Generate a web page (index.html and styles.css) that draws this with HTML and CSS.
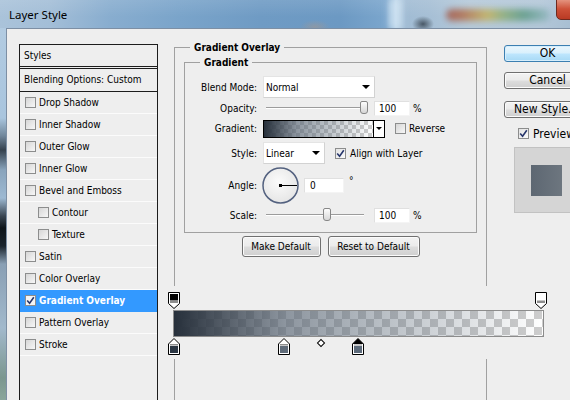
FILE: index.html
```html
<!DOCTYPE html>
<html>
<head>
<meta charset="utf-8">
<title>Layer Style</title>
<link rel="stylesheet" href="styles.css">
</head>
<body>
<div class="titlebar">
  <span class="tb-light"></span>
  <span class="tb-blob"></span>
  <span class="tb-blob2"></span>
  <span class="tb-strip"></span>
  <span class="tb-close"></span>
  <span class="title">Layer Style</span>
</div>
<div class="frame">
  <div class="edge"></div>
  <div class="client">
    <div class="styles">
      <div class="styles-head">Styles</div>
      <div class="blend">Blending Options: Custom</div>
      <div class="srow"><span class="cb"></span><span>Drop Shadow</span></div>
      <div class="srow"><span class="cb"></span><span>Inner Shadow</span></div>
      <div class="srow"><span class="cb"></span><span>Outer Glow</span></div>
      <div class="srow"><span class="cb"></span><span>Inner Glow</span></div>
      <div class="srow"><span class="cb"></span><span>Bevel and Emboss</span></div>
      <div class="srow sub"><span class="cb"></span><span>Contour</span></div>
      <div class="srow sub"><span class="cb"></span><span>Texture</span></div>
      <div class="srow"><span class="cb"></span><span>Satin</span></div>
      <div class="srow"><span class="cb"></span><span>Color Overlay</span></div>
      <div class="srow sel"><span class="cb on"><svg width="9" height="9" viewBox="0 0 9 9"><path d="M1.2 4.4L3.6 7.2L7.8 1.3" fill="none" stroke="#26356b" stroke-width="1.6"/></svg></span><span>Gradient Overlay</span></div>
      <div class="srow"><span class="cb"></span><span>Pattern Overlay</span></div>
      <div class="srow"><span class="cb"></span><span>Stroke</span></div>
    </div>

    <div class="outer">
      <div class="legend">Gradient Overlay</div>
      <div class="inner">
        <div class="legend">Gradient</div>
        <div class="rows">
          <div class="frow r1">
            <span class="lbl">Blend Mode:</span>
            <div class="select wide"><span>Normal</span><span class="arrow"></span></div>
          </div>
          <div class="frow r2">
            <span class="lbl">Opacity:</span>
            <div class="slider"><span class="track"></span><span class="thumb" style="left:97px"></span></div>
            <span class="num">100</span><span class="unit">%</span>
          </div>
          <div class="frow r3">
            <span class="lbl">Gradient:</span>
            <div class="swatch"><span class="sw-grad"></span><span class="sw-dd"><span class="arrow small"></span></span></div>
            <span class="cb gap10"></span><span class="cbtext">Reverse</span>
          </div>
          <div class="frow r4">
            <span class="lbl">Style:</span>
            <div class="select narrow"><span>Linear</span><span class="arrow"></span></div>
            <span class="cb on gap10"><svg width="9" height="9" viewBox="0 0 9 9"><path d="M1.2 4.4L3.6 7.2L7.8 1.3" fill="none" stroke="#26356b" stroke-width="1.6"/></svg></span><span class="cbtext">Align with Layer</span>
          </div>
          <div class="frow r5">
            <span class="lbl">Angle:</span>
            <svg class="dial" width="37" height="37" viewBox="0 0 37 37">
              <defs>
                <radialGradient id="dg" cx="45%" cy="40%" r="65%">
                  <stop offset="0" stop-color="#fbfbfb"/>
                  <stop offset="1" stop-color="#e4e4e4"/>
                </radialGradient>
              </defs>
              <circle cx="18.5" cy="18.5" r="17.5" fill="url(#dg)" stroke="#53617f" stroke-width="1.5"/>
              <line x1="18.5" y1="18.5" x2="35" y2="18.5" stroke="#000" stroke-width="1"/>
              <rect x="17" y="17" width="3" height="3" fill="#000"/>
            </svg>
            <span class="num angle">0</span><span class="deg">°</span>
          </div>
          <div class="frow r6">
            <span class="lbl">Scale:</span>
            <div class="slider"><span class="track"></span><span class="thumb" style="left:60px"></span></div>
            <span class="num">100</span><span class="unit">%</span>
          </div>
        </div>
      </div>
      <div class="btns">
        <span class="btn b1">Make Default</span>
        <span class="btn b2">Reset to Default</span>
      </div>
    </div>

    <div class="side">
      <div class="pbtn ok">OK</div>
      <div class="pbtn cancel">Cancel</div>
      <div class="pbtn newstyle">New Style...</div>
      <div class="prev"><span class="cb on"><svg width="9" height="9" viewBox="0 0 9 9"><path d="M1.2 4.4L3.6 7.2L7.8 1.3" fill="none" stroke="#26356b" stroke-width="1.6"/></svg></span><span class="prevtext">Preview</span></div>
      <div class="prevbox"><div class="prevsq"></div></div>
    </div>
  </div>
</div>

<div class="geditor">
  <div class="ostops">
    <svg class="stop" style="left:3px" width="12" height="17" viewBox="0 0 12 17"><path d="M0.5 0.5H11.5V11.5L6 16.5L0.5 11.5Z" fill="#fff" stroke="#000"/><rect x="2" y="2" width="8" height="6.5" fill="#000"/><rect x="2" y="8.5" width="8" height="2.5" fill="#8e8e8e"/></svg>
    <svg class="stop" style="left:370px" width="12" height="17" viewBox="0 0 12 17"><path d="M0.5 0.5H11.5V11.5L6 16.5L0.5 11.5Z" fill="#fff" stroke="#000"/><rect x="2" y="2" width="8" height="6.5" fill="#fff"/><rect x="2" y="8.5" width="8" height="2.5" fill="#8e8e8e"/></svg>
  </div>
  <div class="gbar"></div>
  <div class="cstops">
    <svg class="stop" style="left:3px" width="12" height="17" viewBox="0 0 12 17"><path d="M6 0.5L11.5 6V16.5H0.5V6Z" fill="#fff" stroke="#000"/><rect x="2" y="6" width="8" height="1.5" fill="#8e8e8e"/><rect x="2" y="8" width="8" height="7" fill="#2b3643"/></svg>
    <svg class="stop" style="left:113px" width="12" height="17" viewBox="0 0 12 17"><path d="M6 0.5L11.5 6V16.5H0.5V6Z" fill="#fff" stroke="#000"/><rect x="2" y="6" width="8" height="1.5" fill="#8e8e8e"/><rect x="2" y="8" width="8" height="7" fill="#5f6b79"/></svg>
    <span class="mid"></span>
    <svg class="stop" style="left:187px" width="12" height="17" viewBox="0 0 12 17"><path d="M6 0.5L11.5 6V16.5H0.5V6Z" fill="#fff" stroke="#000"/><path d="M6 0.5L11.5 6H0.5Z" fill="#000"/><rect x="2" y="6.5" width="8" height="1" fill="#8e8e8e"/><rect x="2" y="8" width="8" height="7" fill="#5c6a7a"/></svg>
  </div>
</div>
</body>
</html>
```

FILE: styles.css
```css
* { box-sizing: border-box; }
html, body { margin: 0; padding: 0; }
body {
  width: 570px;
  height: 400px;
  overflow: hidden;
  position: relative;
  background: #eeeeee;
  font-family: "DejaVu Sans Condensed", "DejaVu Sans", sans-serif;
  font-stretch: condensed;
  font-size: 10px;
  color: #000;
}

/* ---------- title bar ---------- */
.titlebar {
  height: 28px;
  position: relative;
  overflow: hidden;
  padding: 7px 0 0 9px;
  background:
    linear-gradient(rgba(255,255,255,0.10), rgba(255,255,255,0) 60%),
    linear-gradient(to right, #aac3da 0, #a3bed7 50px, #88adcf 110px, #7aa4ca 180px, #6f9bc4 260px, #6c99c3 340px, #7ba6cd 386px, #b9d3e8 396px, #a1bcd4 406px, #a6bfd5 430px, #b5c9d9 470px, #b3c7d8 540px, #a8bfd3 570px);
}
.title {
  position: relative;
  font-family: "Noto Sans", "Open Sans", sans-serif;
  font-stretch: normal;
  font-size: 11.5px;
  line-height: 16px;
  color: #000;
}
.tb-light {
  position: absolute; left: 388px; top: 0; width: 14px; height: 28px;
  background: rgba(220,235,248,0.5); filter: blur(3px);
}
.tb-blob {
  position: absolute; left: 412px; top: 16px; width: 22px; height: 16px;
  background: radial-gradient(closest-side, rgba(50,62,74,0.8), rgba(50,62,74,0));
}
.tb-blob2 {
  position: absolute; left: 300px; top: 20px; width: 30px; height: 14px;
  background: radial-gradient(closest-side, rgba(200,150,110,0.35), rgba(200,150,110,0));
}
.tb-strip {
  position: absolute; left: 446px; top: 9px; width: 104px; height: 12px;
  border-radius: 6px;
  background: linear-gradient(to right, #a0584a, #b26d4e 15%, #c5b35f 40%, #8fae78 55%, #5f9b86 75%, #94b8c2 100%);
  filter: blur(3px);
  opacity: 0.85;
}
.tb-close {
  position: absolute; left: 556px; top: -2px; width: 44px; height: 22px;
  border: 1px solid #6e2a1f;
  border-radius: 0 0 5px 5px;
  background: linear-gradient(#e69a86, #cd5138 50%, #b93a24);
}

/* ---------- frame ---------- */
.frame { display: flex; height: 372px; }
.edge {
  width: 6px;
  flex: none;
  background: linear-gradient(#b2cbe1 0, #a9c5de 90px, #70869a 108px, #34414d 122px, #89a4bc 142px, #9db9d2 170px, #3a4652 188px, #0e1419 200px, #1b242c 218px, #899fb4 236px, #a2b9cc 300px, #7b978f 350px, #8aa69b 372px);
}
.client {
  flex: 1;
  display: flex;
  align-items: flex-start;
  border-top: 1px solid #7d8fa4;
  border-left: 1px solid #7d8fa4;
  padding: 15px 0 0 12px;
  background: #eeeeee;
  overflow: hidden;
}

/* ---------- styles list ---------- */
.styles {
  width: 139px;
  height: 400px;
  flex: none;
  border: 1px solid #1c1c1c;
  border-bottom: none;
}
.styles-head {
  height: 24px;
  border-bottom: 3px double #1c1c1c;
  padding-left: 4px;
  line-height: 21px;
}
.blend {
  height: 23px;
  border-bottom: 1px solid #1c1c1c;
  padding-left: 4px;
  line-height: 22px;
}
.srow {
  height: 22px;
  border-bottom: 1px solid #fbfbfb;
  display: flex;
  align-items: center;
  padding-left: 5px;
}
.srow.sub { padding-left: 18px; }
.srow.sel {
  background: #3399ff;
  color: #fff;
  font-weight: bold;
  border-bottom-color: #3399ff;
}
.srow .cb { margin-right: 3px; }

.cb {
  width: 11px;
  height: 11px;
  flex: none;
  display: inline-flex;
  align-items: center;
  justify-content: center;
  border: 1px solid #8c8d8d;
  background: linear-gradient(135deg, #d6d6d6, #f7f7f7);
}
.cb.on { background: linear-gradient(135deg, #e2e2e2, #fbfbfb); }
.sel .cb.on { background: #f4f4f4; }
.cb svg { display: block; }

/* ---------- fieldsets ---------- */
.outer {
  width: 313px;
  height: 400px;
  flex: none;
  margin: 3px 0 0 16px;
  border: 1px solid #a0a0a0;
  border-bottom: none;
}
.legend {
  width: max-content;
  margin: -7px 0 0 15px;
  padding: 0 4px;
  background: #eeeeee;
  font-weight: bold;
  line-height: 13px;
}
.inner {
  margin: 8px 9px 0 9px;
  border: 1px solid #a0a0a0;
  padding-bottom: 5px;
}
.rows { margin-top: 7px; }
.frow { display: flex; align-items: center; }
.r1 { height: 22px; }
.r2 { height: 20px; }
.r3 { height: 21px; }
.r4 { height: 28px; }
.r5 { height: 36px; }
.r6 { height: 24px; }
.lbl {
  width: 72px;
  flex: none;
  text-align: right;
  margin-right: 6px;
}

.select {
  height: 22px;
  display: flex;
  align-items: center;
  padding-left: 2px;
  background: #fff;
  border: 1px solid #e4e4e4;
  border-right-color: #d2d2d2;
  border-bottom-color: #d2d2d2;
}
.select.wide { width: 112px; }
.select.narrow { width: 62px; }
.arrow {
  margin-left: auto;
  margin-right: 4px;
  width: 0;
  height: 0;
  border-left: 4px solid transparent;
  border-right: 4px solid transparent;
  border-top: 4px solid #000;
}
.arrow.small {
  margin: 0;
  border-left-width: 3px;
  border-right-width: 3px;
  border-top-width: 3px;
}

.slider {
  width: 106px;
  height: 14px;
  flex: none;
  position: relative;
}
.track {
  position: absolute;
  left: 3px;
  top: 6px;
  width: 98px;
  height: 2px;
  border-top: 1px solid #9c9c9c;
  border-bottom: 1px solid #ffffff;
}
.thumb {
  position: absolute;
  top: 0;
  width: 8px;
  height: 13px;
  border: 1px solid #878787;
  border-radius: 2px 2px 3px 3px;
  background: linear-gradient(#fdfdfd, #d6d6d6);
}
.num {
  width: 36px;
  height: 15px;
  margin-left: 5px;
  padding-left: 4px;
  line-height: 13px;
  background: #fff;
  border: 1px solid #e0e0e0;
  border-right-color: #f4f4f4;
  border-bottom-color: #f4f4f4;
}
.num.angle { width: 40px; margin-left: 5px; padding-left: 5px; }
.unit { margin-left: 3px; }
.deg { margin-left: 5px; align-self: flex-start; margin-top: 8px; }
.dial { display: block; margin-left: -1px; flex: none; }

.swatch {
  width: 122px;
  height: 18px;
  display: flex;
  border: 1px solid #000;
}
.sw-grad {
  flex: 1;
  border-right: 1px solid #000;
  background:
    linear-gradient(to right, rgba(39,48,59,1) 0%, rgba(92,104,118,0.7) 30%, rgba(94,108,122,0.5) 50%, rgba(94,108,122,0) 100%),
    repeating-conic-gradient(#cdcdcd 0 25%, #ffffff 0 50%) 0 0 / 8px 8px;
}
.sw-dd {
  width: 10px;
  display: flex;
  align-items: center;
  justify-content: center;
  background: #fff;
}
.gap10 { margin-left: 10px; }
.cbtext { margin-left: 3px; }
.r4 .cbtext { margin-left: 4px; }

/* ---------- buttons ---------- */
.btns {
  display: flex;
  justify-content: center;
  gap: 7px;
  margin-top: 3px;
}
.btn {
  height: 21px;
  display: flex;
  align-items: center;
  justify-content: center;
  border: 1px solid #707070;
  border-radius: 3px;
  background: linear-gradient(#f3f3f3 0%, #ebebeb 48%, #dddddd 52%, #cfcfcf 100%);
  box-shadow: inset 0 0 0 1px #fbfbfb;
}
.b1 { width: 79px; }
.b2 { width: 92px; }

.side {
  width: 87px;
  flex: none;
  margin-left: 17px;
  font-size: 12px;
}
.pbtn {
  height: 17px;
  line-height: 15px;
  text-align: center;
  border: 1px solid #707070;
  border-radius: 3px;
  background: linear-gradient(#f3f3f3 0%, #ebebeb 48%, #dddddd 52%, #cfcfcf 100%);
  box-shadow: inset 0 0 0 1px #fbfbfb;
  white-space: nowrap;
  overflow: hidden;
}
.ok {
  margin-top: 1px;
  border-color: #3c7fb1;
  background: linear-gradient(#eaf6fd 0%, #d9f0fc 48%, #bee6fd 52%, #a7d9f5 100%);
  box-shadow: inset 0 0 0 1px #d6eefc;
}
.cancel { margin-top: 10px; }
.newstyle { margin-top: 12px; text-align: left; padding-left: 9px; }
.prev {
  margin: 10px 0 0 14px;
  height: 11px;
  display: flex;
  align-items: center;
  white-space: nowrap;
}
.prevtext { margin-left: 4px; }
.prevbox {
  width: 66px;
  height: 66px;
  margin: 8px 0 0 10px;
  padding: 17px 0 0 16px;
  background: #d5d5d5;
  border: 1px solid #c2c2c2;
}
.prevsq {
  width: 31px;
  height: 31px;
  background: linear-gradient(to right, #5d6772, #6d767f);
}

/* ---------- gradient editor (pasted over the dialog) ---------- */
.geditor {
  position: absolute;
  left: 165px;
  top: 286px;
  width: 395px;
  height: 73px;
  background: #eeeeee;
}
.ostops { position: relative; height: 24px; }
.ostops .stop { position: absolute; top: 6px; display: block; }
.gbar {
  margin-left: 8px;
  width: 371px;
  height: 27px;
  border: 1px solid #8c8c8c;
  background:
    linear-gradient(to right, rgba(39,48,59,1) 0%, rgba(92,104,118,0.7) 30%, rgba(94,108,122,0.5) 50%, rgba(94,108,122,0) 100%),
    repeating-conic-gradient(#cdcdcd 0 25%, #ffffff 0 50%) 0 0 / 16px 16px;
}
.cstops { position: relative; height: 22px; }
.cstops .stop { position: absolute; top: 1px; display: block; }
.mid {
  position: absolute;
  left: 153px;
  top: 3px;
  width: 6px;
  height: 6px;
  border: 1px solid #000;
  background: #fff;
  transform: rotate(45deg);
}
```
